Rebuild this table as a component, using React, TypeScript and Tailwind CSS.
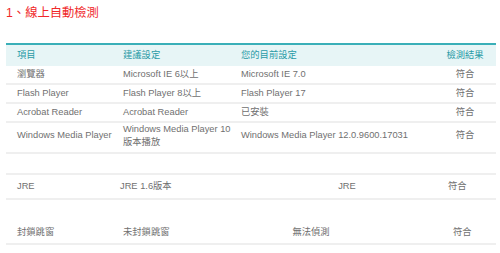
const font = "font-['Liberation_Sans','Noto_Sans_CJK_TC',sans-serif]"

const mainRows = [
  { item: '瀏覽器', suggest: 'Microsoft IE 6以上', current: 'Microsoft IE 7.0', result: '符合', h: 'h-[19px]' },
  { item: 'Flash Player', suggest: 'Flash Player 8以上', current: 'Flash Player 17', result: '符合', h: 'h-[19px]' },
  { item: 'Acrobat Reader', suggest: 'Acrobat Reader', current: '已安裝', result: '符合', h: 'h-[19px]' },
]

export default function App() {
  return (
    <div className={`w-[500px] h-[253px] bg-white ${font} text-[9.3px] text-[#707070]`}>
      {/* title */}
      <div className="pl-[6px] pt-[5px] h-[43px] text-[12.3px] leading-[16px] text-[#f0282a]">1、線上自動檢測</div>

      <div className="ml-[6px] w-[490px]">
        {/* header */}
        <div className="flex items-center h-[23px] border-t-2 border-[#3aafb8] bg-[#e7f5f6] text-[#2a9ba6]">
          <div className="w-[108px] pl-[11px]">項目</div>
          <div className="w-[118px] pl-[9px]">建議設定</div>
          <div className="w-[202px] pl-[9px]">您的目前設定</div>
          <div className="w-[62px] text-center">檢測結果</div>
        </div>

        {mainRows.map(r => (
          <div key={r.item} className={`flex items-center ${r.h} border-b-2 border-[#efefef]`}>
            <div className="w-[108px] pl-[11px]">{r.item}</div>
            <div className="w-[118px] pl-[9px]">{r.suggest}</div>
            <div className="w-[202px] pl-[9px]">{r.current}</div>
            <div className="w-[62px] text-center">{r.result}</div>
          </div>
        ))}

        <div className="flex items-center h-[31px] pb-[4px] border-b-2 border-[#efefef] leading-[13px]">
          <div className="w-[108px] pl-[11px]">Windows Media Player</div>
          <div className="w-[118px] pl-[9px] whitespace-nowrap">Windows Media Player 10<br />版本播放</div>
          <div className="w-[202px] pl-[9px]">Windows Media Player 12.0.9600.17031</div>
          <div className="w-[62px] text-center">符合</div>
        </div>

        {/* empty row */}
        <div className="h-[21px] border-b-2 border-[#efefef]" />

        {/* JRE */}
        <div className="flex items-center h-[25px] pt-[1px] border-b-2 border-[#efefef]">
          <div className="w-[108px] pl-[11px]">JRE</div>
          <div className="w-[118px] pl-[6px]">JRE 1.6版本</div>
          <div className="w-[216px] pl-[14px] text-center">JRE</div>
          <div className="w-[48px]">符合</div>
        </div>

        <div className="h-[20px]" />

        {/* popup block */}
        <div className="flex items-center h-[25px] pt-[2px] border-b-2 border-[#efefef]">
          <div className="w-[108px] pl-[11px]">封鎖跳窗</div>
          <div className="w-[118px] pl-[9px]">未封鎖跳窗</div>
          <div className="w-[158px] text-center">無法偵測</div>
          <div className="w-[106px] pl-[63px]">符合</div>
        </div>
      </div>
    </div>
  )
}
